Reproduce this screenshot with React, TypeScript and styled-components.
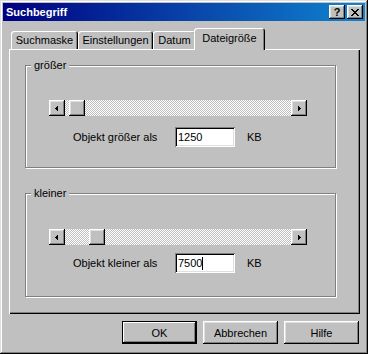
import React, { FC } from 'react';
import styled, { createGlobalStyle } from 'styled-components';

const GlobalStyle = createGlobalStyle`
  html, body {
    margin: 0;
    padding: 0;
    background: #c0c0c0;
  }
  * {
    box-sizing: border-box;
  }
  body {
    font-family: 'Liberation Sans', Arial, sans-serif;
    font-size: 11px;
    color: #000;
  }
`;

const raised = `
  box-shadow: inset -1px -1px #000, inset 1px 1px #fff, inset -2px -2px #808080, inset 2px 2px #dfdfdf;
`;

export const Window = styled.div`
  width: 368px;
  height: 354px;
  padding: 3px;
  display: flex;
  flex-direction: column;
  background: #c0c0c0;
  box-shadow: inset -1px -1px #000, inset 1px 1px #dfdfdf, inset -2px -2px #808080, inset 2px 2px #fff;
`;

export const TitleBar = styled.div`
  height: 18px;
  display: flex;
  align-items: center;
  padding: 0 2px 0 3px;
  background: linear-gradient(90deg, #000080, #1084d0);
`;

export const Title = styled.span`
  flex: 1;
  color: #fff;
  font-weight: bold;
  font-size: 11px;
  line-height: 18px;
`;

export const CaptionButton = styled.div`
  width: 16px;
  height: 14px;
  background: #c0c0c0;
  display: flex;
  align-items: center;
  justify-content: center;
  font-weight: bold;
  font-size: 11px;
  line-height: 14px;
  ${raised}

  & + & {
    margin-left: 2px;
  }
`;

export const TabStrip = styled.div`
  display: flex;
  align-items: flex-end;
  height: 21px;
  margin: 7px 5px 0 6px;
  padding-left: 2px;
  position: relative;
  z-index: 1;
`;

export const Tab = styled.div<{ $w: number; $active?: boolean }>`
  width: ${(p) => p.$w + (p.$active ? 4 : 0)}px;
  height: ${(p) => (p.$active ? 22 : 18)}px;
  margin: 0 ${(p) => (p.$active ? -2 : 0)}px ${(p) => (p.$active ? -1 : 0)}px;
  padding-bottom: ${(p) => (p.$active ? 2 : 0)}px;
  display: flex;
  align-items: center;
  justify-content: center;
  background: #c0c0c0;
  border-radius: 3px 3px 0 0;
  box-shadow: inset 1px 1px #fff, inset -1px 0 #000, inset -2px 0 #808080;
  white-space: nowrap;
`;

export const Panel = styled.div`
  height: 265px;
  margin: 0 5px 0 6px;
  padding: 16px 0 0 16px;
  display: flex;
  flex-direction: column;
  box-shadow: inset 1px 1px #fff, inset -1px -1px #000, inset -2px -2px #808080;
`;

export const GroupBox = styled.div<{ $mt: number; $pt: number; $pb: number }>`
  position: relative;
  width: 311px;
  margin-top: ${(p) => p.$mt}px;
  padding: ${(p) => p.$pt}px 0 ${(p) => p.$pb}px 23px;
  border: 1px solid #808080;
  box-shadow: inset 1px 1px #fff, 1px 1px #fff;
`;

export const GroupLabel = styled.span`
  position: absolute;
  top: -7px;
  left: 5px;
  padding: 0 3px;
  line-height: 13px;
  background: #c0c0c0;
`;

export const ScrollBar = styled.div`
  display: flex;
  width: 258px;
  height: 16px;
`;

export const ScrollArrow = styled.div`
  width: 16px;
  height: 16px;
  flex: none;
  background: #c0c0c0;
  ${raised}

  svg {
    display: block;
  }
`;

export const Track = styled.div`
  flex: 1;
  display: flex;
  background-color: #fff;
  background-image: repeating-conic-gradient(#c0c0c0 0 25%, #fff 0 50%);
  background-size: 2px 2px;
`;

export const Thumb = styled.div`
  width: 16px;
  height: 16px;
  background: #c0c0c0;
  ${raised}
`;

export const FieldRow = styled.div<{ $mt: number }>`
  display: flex;
  align-items: center;
  margin-top: ${(p) => p.$mt}px;
`;

export const FieldLabel = styled.span`
  width: 102px;
  margin-left: 24px;
`;

export const TextBox = styled.div`
  width: 60px;
  height: 20px;
  display: flex;
  align-items: center;
  padding: 0 3px;
  background: #fff;
  box-shadow: inset 1px 1px #808080, inset -1px -1px #fff, inset 2px 2px #000, inset -2px -2px #dfdfdf;
`;

export const Caret = styled.span`
  width: 1px;
  height: 13px;
  background: #000;
`;

export const Unit = styled.span`
  margin-left: 12px;
`;

export const ButtonRow = styled.div`
  display: flex;
  justify-content: flex-end;
  gap: 6px;
  margin-top: 7px;
  padding-right: 6px;
`;

export const Button = styled.div<{ $default?: boolean }>`
  width: 75px;
  height: 23px;
  display: flex;
  align-items: center;
  justify-content: center;
  background: #c0c0c0;
  box-shadow: ${(p) =>
    p.$default
      ? 'inset 0 0 0 1px #000, inset -2px -2px #000, inset 2px 2px #fff, inset -3px -3px #808080'
      : 'inset -1px -1px #000, inset 1px 1px #fff, inset -2px -2px #808080, inset 2px 2px #dfdfdf'};
`;

const CloseGlyph: FC = () => {
  const rows = ['11000011', '01100110', '00111100', '00011000', '00111100', '01100110', '11000011'];
  return (
    <svg width="8" height="7" viewBox="0 0 8 7" shapeRendering="crispEdges">
      {rows.map((row, y) =>
        row.split('').map((c, x) => (c === '1' ? <rect key={`${x}-${y}`} x={x} y={y} width="1" height="1" fill="#000" /> : null))
      )}
    </svg>
  );
};

const Arrow: FC<{ dir: 'left' | 'right' }> = ({ dir }) => (
  <svg width="16" height="16" viewBox="0 0 16 16" shapeRendering="crispEdges">
    {dir === 'left' ? (
      <>
        <rect x="6" y="8" width="1" height="1" fill="#000" />
        <rect x="7" y="7" width="1" height="3" fill="#000" />
        <rect x="8" y="6" width="1" height="5" fill="#000" />
      </>
    ) : (
      <>
        <rect x="7" y="6" width="1" height="5" fill="#000" />
        <rect x="8" y="7" width="1" height="3" fill="#000" />
        <rect x="9" y="8" width="1" height="1" fill="#000" />
      </>
    )}
  </svg>
);

const MAX_KB = 65536;
const TRACK_RANGE = 258 - 32 - 16;

const SizeSlider: FC<{ value: number }> = ({ value }) => (
  <ScrollBar>
    <ScrollArrow>
      <Arrow dir="left" />
    </ScrollArrow>
    <Track>
      <Thumb style={{ marginLeft: Math.round((value / MAX_KB) * TRACK_RANGE) }} />
    </Track>
    <ScrollArrow>
      <Arrow dir="right" />
    </ScrollArrow>
  </ScrollBar>
);

const tabs = [
  { label: 'Suchmaske', w: 67 },
  { label: 'Einstellungen', w: 75 },
  { label: 'Datum', w: 43 },
  { label: 'Dateigröße', w: 67, active: true },
];

const App: FC = () => {
  return (
    <>
      <GlobalStyle />
      <Window>
        <TitleBar>
          <Title>Suchbegriff</Title>
          <CaptionButton>?</CaptionButton>
          <CaptionButton>
            <CloseGlyph />
          </CaptionButton>
        </TitleBar>

        <TabStrip>
          {tabs.map((t) => (
            <Tab key={t.label} $w={t.w} $active={t.active}>
              {t.label}
            </Tab>
          ))}
        </TabStrip>

        <Panel>
          <GroupBox $mt={0} $pt={34} $pb={20}>
            <GroupLabel>größer</GroupLabel>
            <SizeSlider value={1250} />
            <FieldRow $mt={11}>
              <FieldLabel>Objekt größer als</FieldLabel>
              <TextBox>1250</TextBox>
              <Unit>KB</Unit>
            </FieldRow>
          </GroupBox>

          <GroupBox $mt={25} $pt={35} $pb={23}>
            <GroupLabel>kleiner</GroupLabel>
            <SizeSlider value={7500} />
            <FieldRow $mt={8}>
              <FieldLabel>Objekt kleiner als</FieldLabel>
              <TextBox>
                7500
                <Caret />
              </TextBox>
              <Unit>KB</Unit>
            </FieldRow>
          </GroupBox>
        </Panel>

        <ButtonRow>
          <Button $default>OK</Button>
          <Button>Abbrechen</Button>
          <Button>Hilfe</Button>
        </ButtonRow>
      </Window>
    </>
  );
};

export default App;
